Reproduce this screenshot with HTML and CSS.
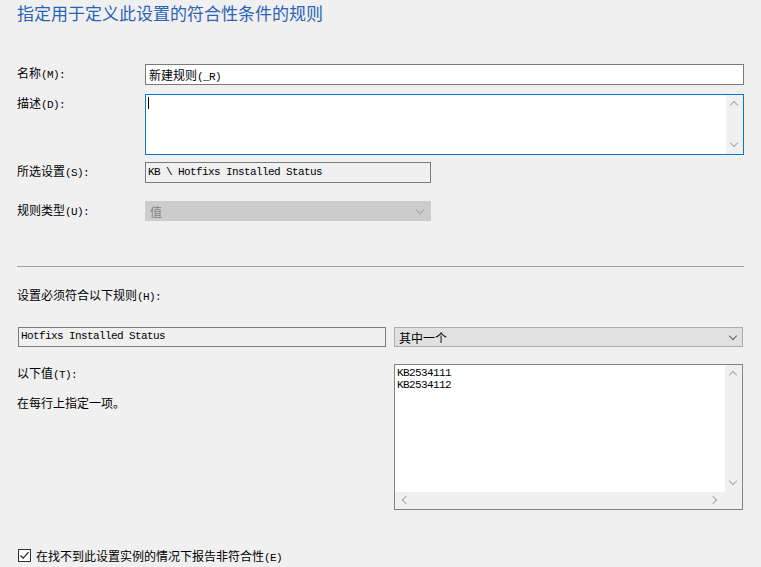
FILE: index.html
```html
<!DOCTYPE html>
<html lang="zh-CN">
  <head>
    <meta charset="UTF-8" />
    <title>规则</title>
    <link rel="stylesheet" href="styles.css">
  </head>
  <body>
    <div class="page">
      <h1 class="title">指定用于定义此设置的符合性条件的规则</h1>

      <div class="field-row row-name">
        <label class="label">名称<span class="key">(M):</span></label>
        <div class="input">新建规则<span class="key">(_R)</span></div>
      </div>

      <div class="field-row row-desc">
        <label class="label">描述<span class="key">(D):</span></label>
        <div class="textarea focused">
          <span class="caret"></span>
          <div class="vscroll">
            <span class="arrow up"></span>
            <span class="arrow down"></span>
          </div>
        </div>
      </div>

      <div class="field-row row-setting">
        <label class="label">所选设置<span class="key">(S):</span></label>
        <div class="readonly mono">KB \ Hotfixs Installed Status</div>
      </div>

      <div class="field-row row-type">
        <label class="label">规则类型<span class="key">(U):</span></label>
        <div class="select disabled">
          <span>值</span>
          <span class="arrow down"></span>
        </div>
      </div>

      <hr class="separator" />

      <div class="label section-label">设置必须符合以下规则<span class="key">(H):</span></div>

      <div class="rule-grid">
        <div class="readonly mono rule-name">Hotfixs Installed Status</div>
        <div class="select">
          <span>其中一个</span>
          <span class="arrow down dark"></span>
        </div>

        <div class="values-help">
          <div class="label">以下值<span class="key">(T):</span></div>
          <div class="label hint">在每行上指定一项。</div>
        </div>
        <div class="values-box">
          <div class="values-text mono">KB2534111<br />KB2534112</div>
          <div class="vscroll">
            <span class="arrow up"></span>
            <span class="arrow down"></span>
          </div>
          <div class="hscroll">
            <span class="arrow left"></span>
            <span class="arrow right"></span>
          </div>
          <div class="corner"></div>
        </div>
      </div>

      <label class="check-row">
        <span class="checkbox">
          <svg width="11" height="11" viewBox="0 0 11 11">
            <path d="M1.5 5.5 L4.2 8.2 L9.5 2.2" fill="none" stroke="#222" stroke-width="1.2" />
          </svg>
        </span>
        <span class="label">在找不到此设置实例的情况下报告非符合性<span class="key">(E)</span></span>
      </label>
    </div>
  </body>
</html>
```

FILE: styles.css
```css
/* Dialog page */
body {
  margin: 0;
  background-color: #f0f0f0;
  font-family: "Noto Sans CJK SC", sans-serif;
  color: #000;
}

.page {
  padding: 0 17px;
  width: 727px;
}

.title {
  margin: 0;
  padding-top: 4px;
  font-size: 17px;
  line-height: 18px;
  font-weight: normal;
  color: #2b63b6;
}

.label {
  height: 15px;
  font-size: 12px;
  line-height: 15px;
  white-space: nowrap;
}

.key,
.mono {
  font-family: "Liberation Mono", "Noto Sans CJK SC", monospace;
  font-size: 11px;
  letter-spacing: -0.6px;
}

.key {
  line-height: 1;
}

/* Top fields */
.field-row {
  display: flex;
  align-items: flex-start;
}

.field-row .label {
  width: 128px;
  flex: none;
  padding-top: 1px;
}

.row-name {
  margin-top: 42px;
}

.row-desc {
  margin-top: 9px;
}

.row-setting {
  margin-top: 7px;
}

.row-type {
  margin-top: 18px;
}

.input {
  flex: 1;
  box-sizing: border-box;
  height: 21px;
  padding: 2px 3px;
  font-size: 12px;
  line-height: 15px;
  background-color: #fff;
  border: 1px solid #7a7a7a;
}

.textarea {
  flex: 1;
  box-sizing: border-box;
  height: 61px;
  position: relative;
  background-color: #fff;
  border: 1px solid #7a7a7a;
}

.textarea.focused {
  border-color: #0078d7;
}

.caret {
  position: absolute;
  left: 2px;
  top: 2px;
  width: 1px;
  height: 12px;
  background-color: #000;
}

.readonly {
  box-sizing: border-box;
  width: 286px;
  height: 21px;
  padding: 3px 2px;
  line-height: 13px;
  background-color: #f0f0f0;
  border: 1px solid #7a7a7a;
}

.select {
  box-sizing: border-box;
  height: 20px;
  padding: 0 4px;
  display: flex;
  align-items: center;
  justify-content: space-between;
  font-size: 12px;
  background-color: #e1e1e1;
  border: 1px solid #adadad;
}

.select.disabled {
  width: 286px;
  color: #838383;
  background-color: #cccccc;
  border-color: #cccccc;
}

/* Scrollbar bits */
.vscroll {
  position: absolute;
  top: 0;
  right: 0;
  bottom: 0;
  width: 17px;
  background-color: #f0f0f0;
}

.vscroll .up {
  position: absolute;
  left: 5px;
  top: 7px;
}

.vscroll .down {
  position: absolute;
  left: 5px;
  bottom: 8px;
}

.arrow {
  display: inline-block;
  width: 5px;
  height: 5px;
  border-right: 1px solid #a6a6a6;
  border-bottom: 1px solid #a6a6a6;
}

.arrow.down {
  transform: rotate(45deg);
  margin-top: -3px;
}

.arrow.up {
  transform: rotate(-135deg);
}

.arrow.left {
  transform: rotate(135deg);
}

.arrow.right {
  transform: rotate(-45deg);
}

.arrow.dark {
  border-color: #606060;
  margin-right: 2px;
}

.select.disabled .arrow {
  margin-right: 3px;
}

/* Rule section */
.separator {
  margin: 45px 0 0;
  border: none;
  border-top: 1px solid #a0a0a0;
}

.section-label {
  margin-top: 20px;
}

.rule-grid {
  margin-top: 25px;
  display: grid;
  grid-template-columns: 369px 349px;
  column-gap: 8px;
  row-gap: 17px;
}

.rule-name {
  width: 368px;
  height: 20px;
  margin-left: 1px;
  padding: 2px 2px;
}

.values-help .label {
  margin-top: 1px;
}

.values-help .hint {
  margin-top: 15px;
}

.values-box {
  position: relative;
  box-sizing: border-box;
  height: 146px;
  background-color: #fff;
  border: 1px solid #828282;
}

.values-text {
  padding: 2px 2px;
  line-height: 12px;
}

.values-box .vscroll {
  bottom: 17px;
}

.hscroll {
  position: absolute;
  left: 0;
  right: 17px;
  bottom: 0;
  height: 17px;
  background-color: #f0f0f0;
}

.hscroll .left {
  position: absolute;
  left: 8px;
  top: 5px;
}

.hscroll .right {
  position: absolute;
  right: 9px;
  top: 5px;
}

.corner {
  position: absolute;
  right: 0;
  bottom: 0;
  width: 17px;
  height: 17px;
  background-color: #f0f0f0;
}

/* Checkbox */
.check-row {
  margin-top: 38px;
  display: flex;
  align-items: center;
  gap: 5px;
}

.checkbox {
  box-sizing: border-box;
  width: 13px;
  height: 13px;
  margin-left: 1px;
  display: flex;
  align-items: center;
  justify-content: center;
  background-color: #fff;
  border: 1px solid #333;
}
```
